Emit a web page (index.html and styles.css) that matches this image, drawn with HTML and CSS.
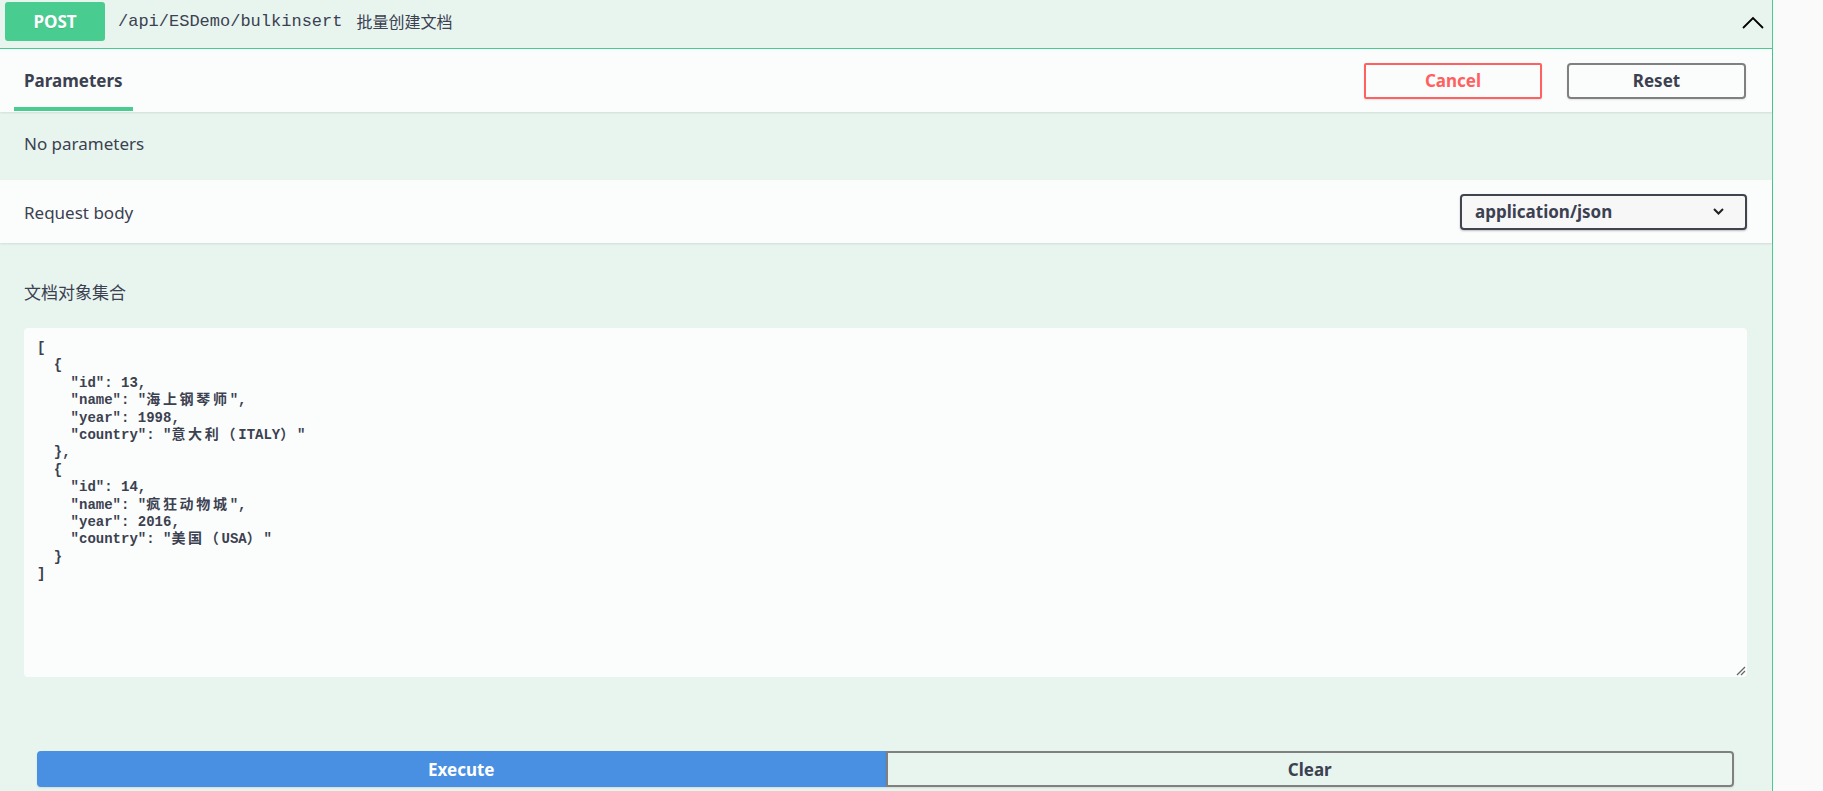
FILE: index.html
```html
<!DOCTYPE html>
<html lang="zh-CN">
<head>
<meta charset="utf-8">
<title>POST /api/ESDemo/bulkinsert</title>
<link rel="stylesheet" href="styles.css">
</head>
<body>
<div class="opblock">
  <div class="summary">
    <span class="method">POST</span>
    <span class="path">/api/ESDemo/bulkinsert</span>
    <span class="desc">批量创建文档</span>
    <svg class="arrow" width="22" height="13" viewBox="0 0 22 13"><polyline points="1,12 11,2 21,12" fill="none" stroke="#000" stroke-width="1.8"/></svg>
  </div>
  <div class="section-header tabs-header">
    <div class="tab"><h4 class="tab-title">Parameters</h4></div>
    <div class="try-out">
      <button class="btn cancel">Cancel</button>
      <button class="btn reset">Reset</button>
    </div>
  </div>
  <div class="params-empty">No parameters</div>
  <div class="section-header rb-header">
    <h4 class="rb-title">Request body</h4>
    <div class="select">
      <span>application/json</span>
      <svg width="11" height="7" viewBox="0 0 11 7"><polyline points="1,1 5.5,5.5 10,1" fill="none" stroke="#222" stroke-width="2"/></svg>
    </div>
  </div>
  <div class="body-param">
    <div class="param-desc">文档对象集合</div>
    <div class="editor">
      <div class="ln">[</div>
      <div class="ln">  {</div>
      <div class="ln">    "id": 13,</div>
      <div class="ln"><span>    "name": "</span><span class="cjk">海上钢琴师</span><span>",</span></div>
      <div class="ln">    "year": 1998,</div>
      <div class="ln"><span>    "country": "</span><span class="cjk">意大利（</span><span>ITALY</span><span class="cjk">）</span><span>"</span></div>
      <div class="ln">  },</div>
      <div class="ln">  {</div>
      <div class="ln">    "id": 14,</div>
      <div class="ln"><span>    "name": "</span><span class="cjk">疯狂动物城</span><span>",</span></div>
      <div class="ln">    "year": 2016,</div>
      <div class="ln"><span>    "country": "</span><span class="cjk">美国（</span><span>USA</span><span class="cjk">）</span><span>"</span></div>
      <div class="ln">  }</div>
      <div class="ln">]</div>
      <svg class="grip" width="10" height="10" viewBox="0 0 10 10"><line x1="1" y1="9" x2="9" y2="1" stroke="#666" stroke-width="1.2"/><line x1="5" y1="9" x2="9" y2="5" stroke="#666" stroke-width="1.2"/></svg>
    </div>
  </div>
  <div class="execute-wrapper">
    <button class="btn execute">Execute</button>
    <button class="btn clear">Clear</button>
  </div>
</div>
</body>
</html>
```
FILE: styles.css
```css
html, body {
  margin: 0;
  padding: 0;
}
body {
  background: #fafafa;
  font-family: "Noto Sans", "Noto Sans CJK SC", sans-serif;
  color: #3b4151;
  overflow: hidden;
}
.opblock {
  width: 1772px;
  min-height: 791px;
  border-right: 1px solid #49cc90;
  background: #e8f5ef;
}
.summary {
  display: flex;
  align-items: flex-start;
  height: 49px;
  box-sizing: border-box;
  padding: 2px 8px 0 5px;
  border-bottom: 1px solid #49cc90;
}
.method {
  width: 100px;
  height: 39px;
  flex: none;
  display: flex;
  align-items: center;
  justify-content: center;
  background: #49cc90;
  color: #fff;
  border-radius: 3px;
  font-weight: 700;
  font-size: 17px;
  text-shadow: 0 1px 0 rgba(0,0,0,.1);
}
.path {
  margin-left: 13px;
  font-family: "Liberation Mono", monospace;
  font-size: 17px;
  line-height: 39px;
}
.desc {
  margin-left: 14px;
  font-family: "Noto Sans CJK SC", sans-serif;
  font-size: 16px;
  line-height: 39px;
}
.arrow {
  margin-left: auto;
  margin-top: 14px;
}
.section-header {
  display: flex;
  align-items: center;
  height: 63px;
  box-sizing: border-box;
  background: rgba(255,255,255,.8);
  box-shadow: 0 1px 2px rgba(0,0,0,.1);
}
.tabs-header {
  padding: 0 26px 0 14px;
}
.tab {
  align-self: stretch;
  display: flex;
  align-items: center;
  padding: 5px 10px 0;
  margin-bottom: 1px;
  border-bottom: 4px solid #49cc90;
}
.tab-title {
  margin: 0;
  font-size: 17px;
  font-weight: 700;
}
.try-out {
  margin-left: auto;
  display: flex;
  gap: 25px;
}
.btn {
  height: 36px;
  width: 179px;
  box-sizing: border-box;
  border: 2px solid #808080;
  border-radius: 4px;
  background: transparent;
  color: #3b4151;
  font-family: "Noto Sans", sans-serif;
  font-weight: 700;
  font-size: 17px;
  box-shadow: 0 1px 2px rgba(0,0,0,.1);
  padding: 0;
}
.cancel {
  width: 178px;
  border-color: #ff6060;
  color: #ff6060;
  border-radius: 2px;
}
.params-empty {
  height: 68px;
  box-sizing: border-box;
  display: flex;
  align-items: center;
  padding: 0 24px 5px;
  font-size: 17px;
}
.rb-header {
  padding: 0 25px 0 24px;
}
.rb-title {
  margin: 0 0 -2px;
  font-size: 17px;
  font-weight: 400;
}
.select {
  margin-left: auto;
  width: 287px;
  height: 36px;
  box-sizing: border-box;
  display: flex;
  align-items: center;
  justify-content: space-between;
  padding: 0 21px 0 13px;
  border: 2px solid #41444e;
  border-radius: 4px;
  background: #f7f7f7;
  font-weight: 700;
  font-size: 17px;
  box-shadow: 0 1px 2px rgba(0,0,0,.25);
}
.body-param {
  padding: 37px 25px 0 24px;
}
.param-desc {
  font-size: 17px;
  line-height: 25px;
  margin-bottom: 23px;
}
.editor {
  position: relative;
  height: 349px;
  box-sizing: border-box;
  padding: 12px 13px 10px;
  background: rgba(255,255,255,.8);
  border-radius: 4px;
  font-family: "Liberation Mono", "Noto Sans CJK SC", monospace;
  font-weight: 700;
  font-size: 14px;
  line-height: 17.4px;
}
.ln {
  white-space: pre;
  height: 17.4px;
}
.cjk {
  letter-spacing: 2.7px;
}
.grip {
  position: absolute;
  right: 1px;
  bottom: 1px;
}
.execute-wrapper {
  display: flex;
  padding: 74px 38px 0 37px;
}
.execute-wrapper .btn {
  flex: 1;
  width: auto;
}
.execute {
  background: #4990e2;
  border-color: #4990e2;
  color: #fff;
  border-radius: 4px 0 0 4px;
}
.clear {
  border-radius: 0 4px 4px 0;
}
```
